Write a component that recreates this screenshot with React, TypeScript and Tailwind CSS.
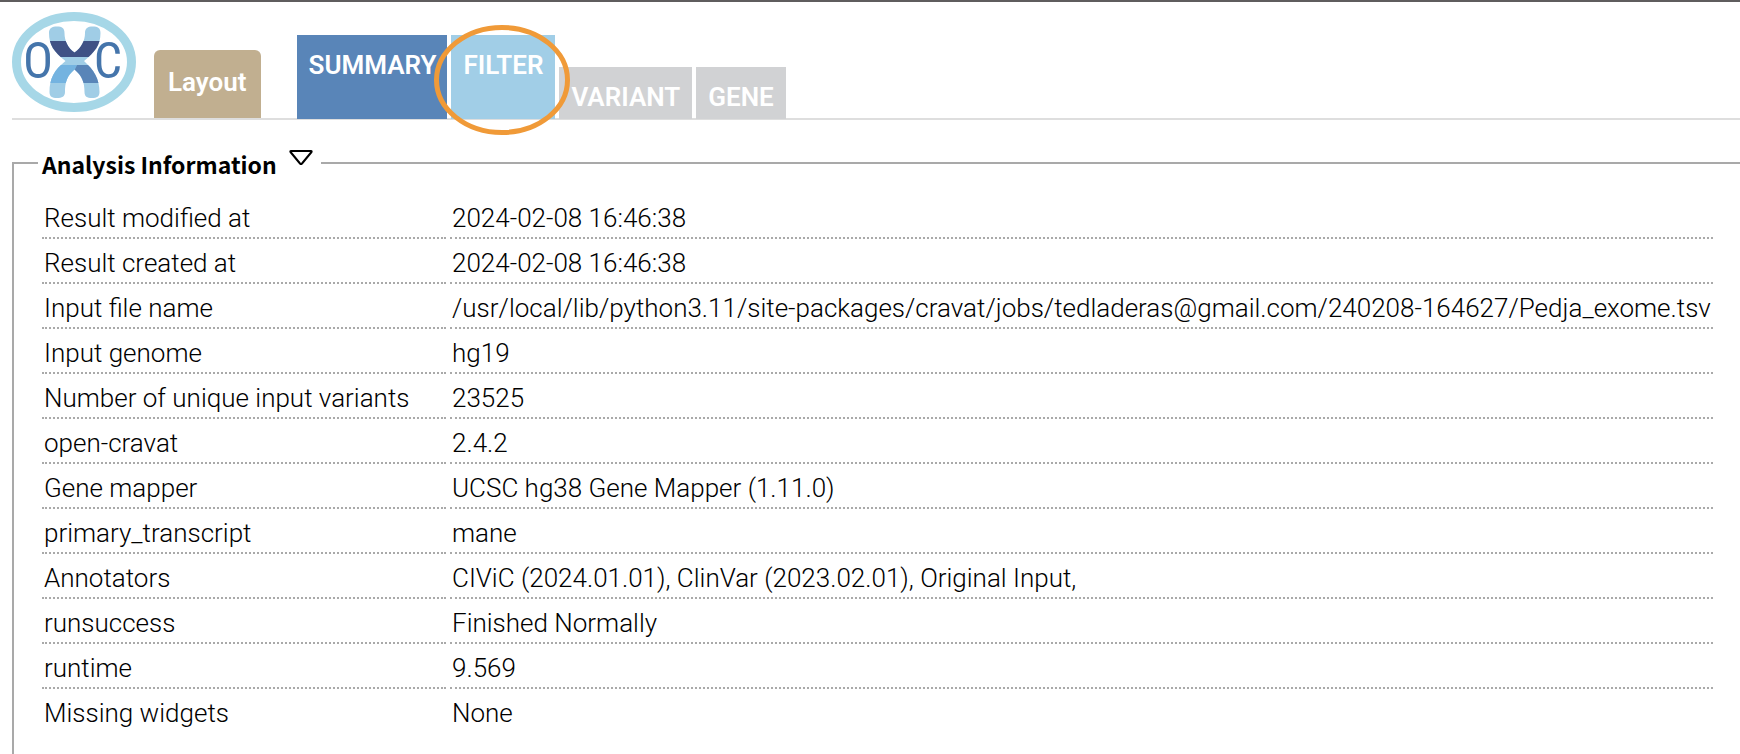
const analysisRows: [string, string][] = [
  ["Result modified at", "2024-02-08 16:46:38"],
  ["Result created at", "2024-02-08 16:46:38"],
  ["Input file name", "/usr/local/lib/python3.11/site-packages/cravat/jobs/tedladeras@gmail.com/240208-164627/Pedja_exome.tsv"],
  ["Input genome", "hg19"],
  ["Number of unique input variants", "23525"],
  ["open-cravat", "2.4.2"],
  ["Gene mapper", "UCSC hg38 Gene Mapper (1.11.0)"],
  ["primary_transcript", "mane"],
  ["Annotators", "CIViC (2024.01.01), ClinVar (2023.02.01), Original Input,"],
  ["runsuccess", "Finished Normally"],
  ["runtime", "9.569"],
  ["Missing widgets", "None"],
];

function Logo() {
  return (
    <svg className="h-[100px] w-[124px] shrink-0" viewBox="12 12 124 100" role="img" aria-label="OXC">
      <defs>
        <clipPath id="chromosome">
          <path d="M49 33C49 28 52 26.500 57 26.500C62 26.500 64.500 28 64.500 33C64.500 41 68 48 74.500 52.500C81 48 85 41 85 33C85 28 88 26.500 92.500 26.500C98 26.500 100.500 28 100.500 33C100.500 45 95 52 84 61C94 70 99.500 79 99.500 92C99.500 96.500 97 98 92 98C87 98 84.500 96.500 84.500 92C84.500 82 82 76 74.500 69.500C67 76 65 82 65 92C65 96.500 62 98 57 98C52 98 49.500 96.500 49.500 92C49.500 79 54 70 65.500 61C54 52 49 45 49 33Z" />
        </clipPath>
      </defs>
      <ellipse cx="74" cy="62" rx="57.500" ry="45.500" fill="#fff" stroke="#a6d7e7" strokeWidth="9" />
      <g fill="#4575ab" fontFamily="Roboto Condensed, Roboto, sans-serif" fontSize="50" textAnchor="middle">
        <text x="38" y="78">O</text>
        <text x="108" y="78">C</text>
      </g>
      <g clipPath="url(#chromosome)">
        <rect x="48" y="25" width="54" height="75" fill="#a0cde6" />
        <rect x="48" y="41" width="54" height="16" fill="#3f5185" />
        <path d="M48 65H77L74.500 70V83H48Z" fill="#74b3e0" />
        <path d="M77 65H102V83H74.500V70Z" fill="#5985b8" />
      </g>
    </svg>
  );
}

export default function App() {
  return (
    <div className="flex min-h-screen flex-col overflow-x-hidden border-t-2 border-[#5f5d5e] bg-white pl-3 font-[Roboto,sans-serif] text-black">
      <header className="flex h-[118px] items-end border-b-2 border-[#dedede]">
        <div className="self-start pt-[10px]">
          <Logo />
        </div>
        <button type="button" className="ml-[18px] h-[68px] rounded-t-md bg-[#c1af90] px-[14px] pb-1 text-[26px] leading-8 font-semibold text-white">
          Layout
        </button>
        <nav className="-mb-px ml-9 flex items-end gap-1 text-[26px] leading-8 font-semibold text-white">
          <button type="button" className="h-[84px] bg-[#5985b8] pr-[11px] pb-6 pl-3">SUMMARY</button>
          <div className="relative">
            <button type="button" className="block h-[84px] bg-[#a1cee7] px-3 pb-6">FILTER</button>
            <svg className="pointer-events-none absolute -top-[11px] -left-[18px] h-[112px] w-[138px]" viewBox="0 0 138 112" aria-hidden="true">
              <ellipse cx="69" cy="56" rx="65.500" ry="52.500" fill="none" stroke="#f09a38" strokeWidth="5" />
            </svg>
          </div>
          <button type="button" className="h-[52px] bg-[#d1d2d4] px-3 pt-2">VARIANT</button>
          <button type="button" className="h-[52px] bg-[#d1d2d4] px-3 pt-2">GENE</button>
        </nav>
      </header>

      <fieldset className="mt-6 min-w-0 flex-1 border-t-2 border-l-2 border-[#a9a9a9] pb-4 pl-6">
        <legend className="flex h-[38px] gap-3 pr-2 pl-1 font-['Noto_Sans_CJK_JP',sans-serif] text-[23px] leading-10 font-bold">
          Analysis Information
          <button type="button" aria-label="Collapse section" className="flex h-6 items-start pt-[6px]">
            <svg className="h-4 w-6" viewBox="0 0 24 16" fill="none" stroke="#000" strokeWidth="2" strokeLinejoin="round" aria-hidden="true">
              <path d="M2 1H22Q23 1 22.500 2L13 13.500Q12 14.500 11 13.500L1.500 2Q1 1 2 1Z" />
            </svg>
          </button>
        </legend>
        <table className="mt-3 border-separate border-spacing-x-1 border-spacing-y-0 text-left text-[26px] leading-[35px] font-light whitespace-nowrap">
          <tbody>
            {analysisRows.map(([label, value]) => (
              <tr key={label} className="group">
                <th scope="row" className="w-[404px] min-w-[404px] border-b-2 border-dotted border-[#a9a9a9] px-[2px] pt-[7px] pb-px font-light group-last:border-transparent">
                  {label}
                </th>
                <td className="border-b-2 border-dotted border-[#a9a9a9] px-[2px] pt-[7px] pb-px group-last:border-transparent">{value}</td>
              </tr>
            ))}
          </tbody>
        </table>
      </fieldset>
    </div>
  );
}
